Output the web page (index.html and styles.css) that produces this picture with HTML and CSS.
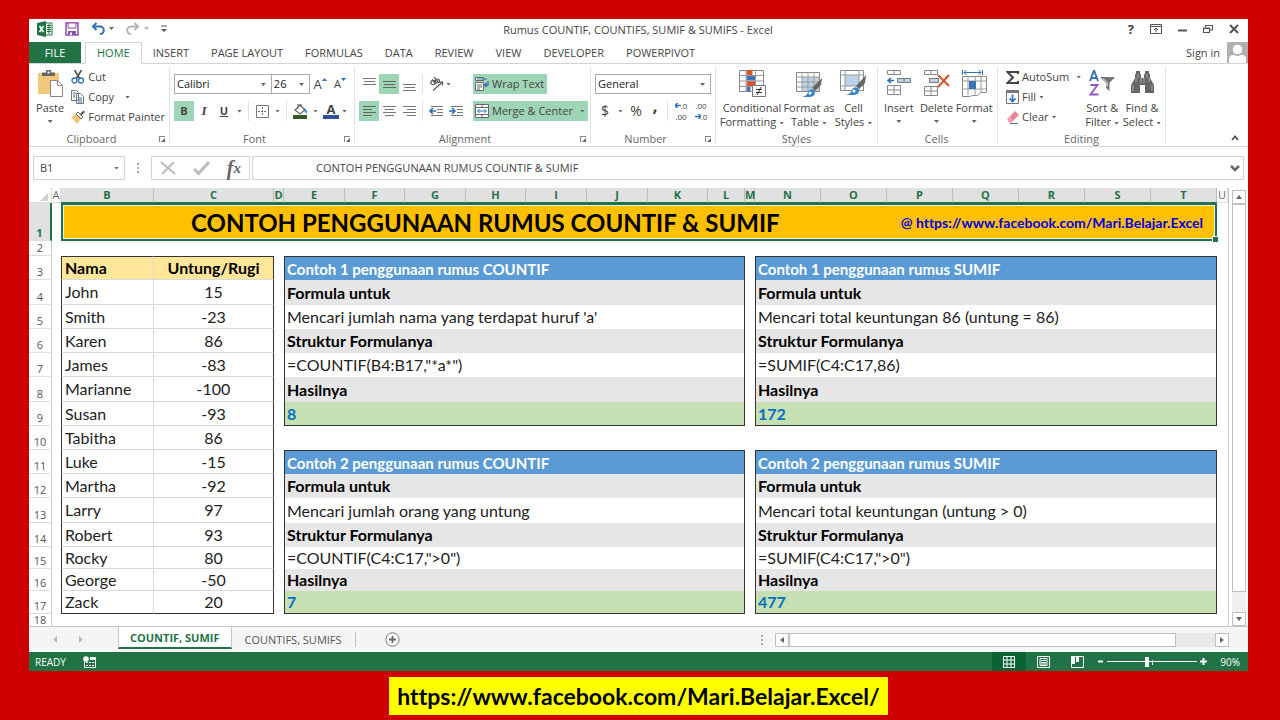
FILE: index.html
```html
<!DOCTYPE html>
<html lang="id">
<head>
<meta charset="utf-8">
<title>Rumus COUNTIF, COUNTIFS, SUMIF &amp; SUMIFS - Excel</title>
<meta name="viewport" content="width=device-width, initial-scale=1">
<link rel="stylesheet" href="styles.css">
</head>
<body>
<main class="window">
  <header class="titlebar">
    <div class="quick">
      <svg class="ico" width="16" height="16" viewBox="0 0 16 16" aria-hidden="true"><path d="M8 2h7v12H8z" fill="#fff" stroke="#217346"/><path d="M10 4.500h4M10 6.500h4M10 8.500h4M10 10.500h4M12 3v10" stroke="#217346"/><path d="M0 2l9-2v16l-9-2z" fill="#217346"/><path d="M2.500 5l4 6M6.500 5l-4 6" stroke="#fff" stroke-width="1.500"/></svg>
      <button class="plain" aria-label="Save"><svg width="14" height="14" viewBox="0 0 14 14"><path d="M1 1h12v12H1z" fill="#fff" stroke="#8a4fb0" stroke-width="1.500"/><path d="M3 1h8v5H3z" fill="#fff" stroke="#8a4fb0"/><path d="M3 9h8v4H3z" fill="#8a4fb0"/><path d="M5 10.500h2V13H5z" fill="#fff"/></svg></button>
      <button class="plain" aria-label="Undo"><svg width="23" height="14" viewBox="0 0 23 14"><path d="M2 4.500h7a3.800 3.800 0 0 1 0 7.600" fill="none" stroke="#2f6fb5" stroke-width="2"/><path d="M5.500 1L2 4.500 5.500 8" fill="none" stroke="#2f6fb5" stroke-width="2"/><path d="M18 5h5l-2.500 3z" fill="#666"/></svg></button>
      <button class="plain" aria-label="Redo"><svg width="23" height="14" viewBox="0 0 23 14"><path d="M12 4.500H5a3.800 3.800 0 0 0 0 7.600" fill="none" stroke="#b5b5b5" stroke-width="2"/><path d="M8.500 1L12 4.500 8.500 8" fill="none" stroke="#b5b5b5" stroke-width="2"/><path d="M18 5h5l-2.500 3z" fill="#b5b5b5"/></svg></button>
      <button class="plain" aria-label="Customize Quick Access Toolbar"><svg width="6" height="8" viewBox="0 0 6 8"><path d="M0 1h6" stroke="#555"/><path d="M0 4h6L3 7z" fill="#555"/></svg></button>
    </div>
    <h1 class="doc-title">Rumus COUNTIF, COUNTIFS, SUMIF &amp; SUMIFS - Excel</h1>
    <div class="win-buttons">
      <button class="plain help" aria-label="Help">?</button>
      <button class="plain" aria-label="Ribbon Display Options"><svg width="12" height="10" viewBox="0 0 12 10"><path d="M.5.500h11v9H.5zM.5 2.500h11" fill="none" stroke="#555"/><path d="M6 8.500V4M4 6l2-2 2 2" fill="none" stroke="#555"/></svg></button>
      <button class="plain" aria-label="Minimize"><svg width="9" height="10" viewBox="0 0 9 10"><path d="M0 6.500h9" stroke="#555" stroke-width="2"/></svg></button>
      <button class="plain" aria-label="Restore"><svg width="10" height="10" viewBox="0 0 10 10"><path d="M.5 4h6v4.500h-6zM.5 4.500h6M2.500 3V1.500h7V6H7" fill="none" stroke="#555" stroke-width="1.200"/></svg></button>
      <button class="plain" aria-label="Close"><svg width="10" height="10" viewBox="0 0 10 10"><path d="M1 1l8 8M9 1L1 9" stroke="#555" stroke-width="2"/></svg></button>
    </div>
  </header>

  <nav class="tabs">
    <button class="file">FILE</button>
    <button class="tab current">HOME</button>
    <button class="tab">INSERT</button>
    <button class="tab">PAGE LAYOUT</button>
    <button class="tab">FORMULAS</button>
    <button class="tab">DATA</button>
    <button class="tab">REVIEW</button>
    <button class="tab">VIEW</button>
    <button class="tab">DEVELOPER</button>
    <button class="tab">POWERPIVOT</button>
    <button class="signin">Sign in
      <svg width="21" height="21" viewBox="0 0 21 21" aria-hidden="true"><path d="M0 0h21v21H0z" fill="#b0b0b0"/><circle cx="10.500" cy="7.500" r="4.800" fill="#fff"/><path d="M2 21v-4q0-4 4-4h1q3.500 2 7 0h1q4 0 4 4v4z" fill="#fff"/></svg>
    </button>
  </nav>

  <section class="ribbon" aria-label="Home">
    <div class="group g-clip">
      <div class="tools">
        <button class="big paste"><svg width="27" height="27" viewBox="0 0 27 27"><path d="M1 3h21v21H1z" fill="#f0c77b"/><path d="M5 6V2.500h4V0h5v2.500h4V6z" fill="#666"/><path d="M10.500 1.500h2v2h-2z" fill="#fff"/><path d="M13.500 10.500h7l5 5v11h-12z" fill="#fff" stroke="#888"/><path d="M20.500 10.500v5h5" fill="none" stroke="#888"/></svg>Paste<i class="caret"></i></button>
        <div class="stack">
          <button class="line"><svg width="14" height="14" viewBox="0 0 14 14"><path d="M3.500 0l5.500 9M10.500 0L5 9" stroke="#555" stroke-width="1.700"/><circle cx="3.500" cy="10.500" r="2.500" fill="none" stroke="#3b74b5" stroke-width="1.300"/><circle cx="10" cy="10.500" r="2.500" fill="none" stroke="#3b74b5" stroke-width="1.300"/></svg>Cut</button>
          <button class="line"><svg width="14" height="14" viewBox="0 0 14 14"><path d="M.5.500h5l2 2v8h-7zM5.500 3.500h4l3 3v7h-7z" fill="#fff" stroke="#777"/><path d="M2 3h3M2 5h2M2 7h2M7 8h4M7 10h4M7 12h4" stroke="#3b74b5"/></svg>Copy<i class="caret gap"></i></button>
          <button class="line"><svg width="14" height="14" viewBox="0 0 14 14"><path d="M0 7l5-3 5 5-4 5z" fill="#f0c77b"/><path d="M5 4l2-2 5 5-2 2z" fill="#fff" stroke="#666"/><path d="M9 4l3.500-3.500L14 2l-3.500 3.500z" fill="#555"/></svg>Format Painter</button>
        </div>
      </div>
      <div class="glabel with-launch">Clipboard<i class="launch"></i></div>
    </div>

    <div class="group g-font">
      <div class="rows">
        <div class="row">
          <span class="combo fontname"><select aria-label="Font"><option>Calibri</option></select></span><span class="combo fontsize"><select aria-label="Font size"><option>26</option></select></span>
          <button class="t grow" aria-label="Increase Font Size">A<svg width="5" height="3" viewBox="0 0 5 3"><path d="M0 3h5L2.500 0z" fill="#2f6fb5"/></svg></button>
          <button class="t shrink" aria-label="Decrease Font Size">A<svg width="5" height="3" viewBox="0 0 5 3"><path d="M0 0h5L2.500 3z" fill="#2f6fb5"/></svg></button>
        </div>
        <div class="row">
          <button class="t on bold">B</button>
          <button class="t italic">I</button>
          <button class="t under">U</button>
          <i class="caret slim"></i>
          <i class="bar"></i>
          <button class="t" aria-label="Borders"><svg width="13" height="13" viewBox="0 0 13 13"><path d="M.5.500h12v12H.5z" fill="none" stroke="#777"/><path d="M6.500 2v9M2 6.500h9" stroke="#777" stroke-dasharray="2 1"/></svg></button>
          <i class="caret slim"></i>
          <i class="bar"></i>
          <button class="t" aria-label="Fill Color"><svg width="15" height="15" viewBox="0 0 15 15"><path d="M7 1l5 5-5 4-5-4z" fill="#fff" stroke="#666" stroke-width="1.200"/><path d="M5 5V0h3v3" fill="none" stroke="#666"/><path d="M11 4q4 2 2.500 6-1-3-3-3.500z" fill="#3b74b5"/><path d="M0 11h14v4H0z" fill="#375623"/></svg></button>
          <i class="caret slim"></i>
          <button class="t fcolor" aria-label="Font Color">A</button>
          <i class="caret slim"></i>
        </div>
      </div>
      <div class="glabel with-launch">Font<i class="launch"></i></div>
    </div>

    <div class="group g-align">
      <div class="tools">
        <div class="rows">
          <div class="row">
            <button class="t" aria-label="Top Align"><svg width="13" height="14" viewBox="0 0 13 14"><path d="M0 1.500h13M1 4.500h11M0 7.500h13" stroke="#777"/></svg></button>
            <button class="t on" aria-label="Middle Align"><svg width="13" height="14" viewBox="0 0 13 14"><path d="M0 4.500h13M1 7.500h11M0 10.500h13" stroke="#666"/></svg></button>
            <button class="t" aria-label="Bottom Align"><svg width="13" height="14" viewBox="0 0 13 14"><path d="M0 7.500h13M1 10.500h11M0 13.500h13" stroke="#777"/></svg></button>
            <i class="bar"></i>
            <button class="t" aria-label="Orientation"><svg width="15" height="14" viewBox="0 0 15 14"><g fill="none" stroke="#555" stroke-width="1.200"><circle cx="4" cy="5.500" r="2.200"/><path d="M3 2.500l3.500 4"/><circle cx="8.500" cy="4" r="2"/><path d="M5 0l4.500 5.500"/><path d="M4 13.500l9-8M10 5h3.500v3.500"/></g></svg></button>
            <i class="caret"></i>
          </div>
          <div class="row">
            <button class="t on" aria-label="Align Left"><svg width="13" height="10" viewBox="0 0 13 10"><path d="M0 .5h13M0 3.500h9M0 6.500h13M0 9.500h9" stroke="#666"/></svg></button>
            <button class="t" aria-label="Center"><svg width="13" height="10" viewBox="0 0 13 10"><path d="M0 .5h13M2 3.500h9M0 6.500h13M2 9.500h9" stroke="#777"/></svg></button>
            <button class="t" aria-label="Align Right"><svg width="13" height="10" viewBox="0 0 13 10"><path d="M0 .5h13M4 3.500h9M0 6.500h13M4 9.500h9" stroke="#777"/></svg></button>
            <i class="bar"></i>
            <button class="t" aria-label="Decrease Indent"><svg width="14" height="10" viewBox="0 0 14 10"><path d="M2 .5h12M8 3.500h6M8 6.500h6M2 9.500h12" stroke="#777"/><path d="M1 5h6M4 2L1 5l3 3" fill="none" stroke="#2f6fb5" stroke-width="1.600"/></svg></button>
            <button class="t" aria-label="Increase Indent"><svg width="14" height="10" viewBox="0 0 14 10"><path d="M2 .5h12M8 3.500h6M8 6.500h6M2 9.500h12" stroke="#777"/><path d="M0 5h6M3 2l3 3-3 3" fill="none" stroke="#2f6fb5" stroke-width="1.600"/></svg></button>
          </div>
        </div>
        <div class="rows wraps">
          <button class="wide on"><svg width="14" height="15" viewBox="0 0 14 15"><path d="M.5.500h8v3h-8zM.5 5.500h8v8h-8z" fill="#fff" stroke="#666"/><path d="M2 8h5M2 10h5M2 12h3" stroke="#666"/><path d="M2 2h10" stroke="#2f6fb5"/><path d="M13 4v4h-3M11.500 6l-2 2 2 2" fill="none" stroke="#2f6fb5" stroke-width="1.300"/></svg>Wrap Text</button>
          <button class="wide on"><svg width="14" height="14" viewBox="0 0 14 14"><path d="M.5.500h13v13H.5zM.5 3.500h13M.5 10.500h13M7 .5v3M7 10.500v3" fill="#fff" stroke="#666"/><path d="M3 7h8M4.500 5L2.500 7l2 2M9.500 5l2 2-2 2" fill="none" stroke="#2f6fb5"/></svg>Merge &amp; Center<i class="caret end"></i></button>
        </div>
      </div>
      <div class="glabel with-launch">Alignment<i class="launch"></i></div>
    </div>

    <div class="group g-num">
      <div class="rows">
        <div class="row"><span class="combo general"><select aria-label="Number Format"><option>General</option></select></span></div>
        <div class="row">
          <button class="t money">$</button>
          <i class="caret slim"></i>
          <button class="t money">%</button>
          <button class="t comma" aria-label="Comma Style">,</button>
          <i class="bar"></i>
          <button class="t dec" aria-label="Increase Decimal"><svg width="6" height="5" viewBox="0 0 6 5"><path d="M0 2.500h6M2.500 0L0 2.500 2.500 5" fill="none" stroke="#2f6fb5" stroke-width="1.400"/></svg><span>.0</span><span class="full">.00</span></button>
          <button class="t dec" aria-label="Decrease Decimal"><span class="full">.00</span><svg width="6" height="5" viewBox="0 0 6 5"><path d="M0 2.500h6M3.500 0L6 2.500 3.500 5" fill="none" stroke="#2f6fb5" stroke-width="1.400"/></svg><span>.0</span></button>
        </div>
      </div>
      <div class="glabel with-launch">Number<i class="launch"></i></div>
    </div>

    <div class="group g-styles">
      <div class="tools">
        <button class="big b-cond"><svg width="27" height="27" viewBox="0 0 27 27"><path d="M.5.500h24v21H.5z" fill="#fff" stroke="#888"/><path d="M7.500 0h6v5h-6zM7.500 11h9v5h-9z" fill="#d9532c"/><path d="M7.500 5.500h9v5h-9zM7.500 16.500h4v5h-4z" fill="#3b74b5"/><path d="M.5 5.500h24M.5 11h24M.5 16.500h24M7 .5v21M16.500.500v21" stroke="#999" fill="none"/><path d="M13.500 15.500h13v11h-13z" fill="#fff" stroke="#777"/><path d="M17 19.500h6M17 22.500h6M22 17l-4 8" stroke="#333"/></svg><span>Conditional<br>Formatting<i class="caret in"></i></span></button>
        <button class="big b-table"><svg width="27" height="27" viewBox="0 0 27 27"><path d="M.5 2.500h23v19H.5z" fill="#fff" stroke="#888"/><path d="M6 7h17v14H6z" fill="#bcd3ea"/><path d="M.5 7h23M.5 12h23M.5 17h23M6 2.500v19M12 2.500v19M18 2.500v19" stroke="#999"/><path d="M26 8l-1 7-6 6-3-3z" fill="#666"/><path d="M6 27q5-1 6-5t6-2q3 6-4 7z" fill="#3b84c6"/><circle cx="14" cy="23" r="1.500" fill="#fff"/></svg><span>Format as<br>Table<i class="caret in"></i></span></button>
        <button class="big b-cell"><svg width="27" height="27" viewBox="0 0 27 27"><path d="M.5.500h23v20H.5z" fill="#fff" stroke="#888"/><path d="M5 5h14v11H5z" fill="#bcd3ea"/><path d="M.5 5h23M.5 16h23M5 .5v20M19 .5v20" stroke="#999"/><path d="M26 5l-1 8-6 6-3-3z" fill="#666"/><path d="M6 25q5-1 6-5t6-2q3 6-4 7z" fill="#3b84c6"/><circle cx="14" cy="21" r="1.500" fill="#fff"/></svg><span>Cell<br>Styles<i class="caret in"></i></span></button>
      </div>
      <div class="glabel">Styles</div>
    </div>

    <div class="group g-cells">
      <div class="tools">
        <button class="big b-c"><svg width="27" height="27" viewBox="0 0 27 27"><path d="M2.500.500h13v4h-13zM9 .5v4M2.500 15.500h13v9h-13zM9 15.500v9M2.500 20h13" fill="#fff" stroke="#888"/><path d="M12.500 8.500h13v4h-13zM19 8.500v4" fill="#bcd3ea" stroke="#777"/><path d="M3 10.500h6M6 8l-3 2.500L6 13" fill="none" stroke="#2f6fb5" stroke-width="1.600"/></svg>Insert<i class="caret"></i></button>
        <button class="big b-c"><svg width="27" height="27" viewBox="0 0 27 27"><path d="M1.500.500h13v4h-13zM8 .5v4M1.500 16.500h13v9h-13zM8 16.500v9M1.500 21h13" fill="#fff" stroke="#888"/><path d="M6.500 8.500h9v4h-9z" fill="#bcd3ea" stroke="#777"/><path d="M15 5l11 11M26 5L15 17" stroke="#d9532c" stroke-width="2"/></svg>Delete<i class="caret"></i></button>
        <button class="big b-c"><svg width="27" height="27" viewBox="0 0 27 27"><path d="M1.500 0v5M21.500 0v5M3 2.500h17M5.500 0L3 2.500 5.500 5M17.500 0L20 2.500 17.500 5" fill="none" stroke="#2f6fb5"/><path d="M1.500 6.500h24v16h-6l-3 3h-5l-3 1h-7z" fill="#fff" stroke="#888"/><path d="M1.500 11h24M1.500 19h24M7 6.500v19M14 6.500v18M20 6.500v16" stroke="#999"/><path d="M8 11h7v8H8z" fill="#3b74b5"/></svg>Format<i class="caret"></i></button>
      </div>
      <div class="glabel">Cells</div>
    </div>

    <div class="group g-edit">
      <div class="tools">
        <div class="stack">
          <button class="line"><svg width="13" height="13" viewBox="0 0 13 13"><path d="M12 3V1H1.500L7 6.500 1.500 12H12v-2" fill="none" stroke="#444" stroke-width="2"/></svg>AutoSum<i class="caret far"></i></button>
          <button class="line"><svg width="13" height="14" viewBox="0 0 13 14"><path d="M.5.500h12v13H.5z" fill="#fff" stroke="#777"/><path d="M0 0h13v3H0z" fill="#777"/><path d="M6.500 4.500v7M3.500 8.500l3 3 3-3" fill="none" stroke="#2f6fb5" stroke-width="1.700"/></svg>Fill<i class="caret"></i></button>
          <button class="line"><svg width="13" height="13" viewBox="0 0 13 13"><path d="M4 5l5-5 4 4-6 6z" fill="#e8849a"/><path d="M1 8l3-3 3.500 4.500L5 12H3.500z" fill="#e8849a" opacity=".75"/><path d="M4 12.500h8" stroke="#777"/></svg>Clear<i class="caret"></i></button>
        </div>
        <button class="big b-sort"><svg width="26" height="27" viewBox="0 0 26 27"><path d="M1 11L4.800 1h.4L9 11M2.500 8h5" fill="none" stroke="#3b74b5" stroke-width="2"/><path d="M1.500 15h7l-7 9.500h8" fill="none" stroke="#9355b8" stroke-width="1.800"/><path d="M11 7h15l-5.500 6v8l-3.500-3v-5z" fill="#777"/><path d="M14 8.500l4 4v4" fill="none" stroke="#fff"/></svg><span>Sort &amp;<br>Filter<i class="caret in"></i></span></button>
        <button class="big b-find"><svg width="25" height="27" viewBox="0 0 25 27"><path d="M6 1h4v3h1v4h3V4h1V1h4v3h1v4l4 7v8h-9v-8h-5v8H1v-8l4-7V4h1z" fill="#666"/><path d="M3 15v6M6 8v4M19 8v4M22 15v6M11 8v5M14 8v5M8 4v4M17 4v4" stroke="#aaa"/></svg><span>Find &amp;<br>Select<i class="caret in"></i></span></button>
      </div>
      <div class="glabel">Editing</div>
    </div>
    <button class="plain collapse" aria-label="Collapse the Ribbon"><svg width="8" height="6" viewBox="0 0 8 6"><path d="M1 5l3-3.500L7 5" fill="none" stroke="#555" stroke-width="1.800"/></svg></button>
  </section>

  <section class="formula-bar">
    <span class="combo namebox"><select aria-label="Name Box"><option>B1</option></select></span>
    <i class="dots"></i>
    <div class="fx">
      <button class="plain" aria-label="Cancel"><svg width="16" height="14" viewBox="0 0 16 14"><path d="M1 1l14 12M14 1L2 13" stroke="#bbb" stroke-width="2"/></svg></button>
      <button class="plain" aria-label="Enter"><svg width="17" height="14" viewBox="0 0 17 14"><path d="M1 8l4.500 4.500L16 1" fill="none" stroke="#bbb" stroke-width="3"/></svg></button>
      <button class="plain fn" aria-label="Insert Function">f<small>x</small></button>
    </div>
    <div class="formula">
      <input type="text" aria-label="Formula Bar" value="CONTOH PENGGUNAAN RUMUS COUNTIF &amp; SUMIF">
      <button class="plain" aria-label="Expand Formula Bar"><svg width="10" height="8" viewBox="0 0 10 8"><path d="M1 2l4 4 4-4" fill="none" stroke="#666" stroke-width="2.500"/></svg></button>
    </div>
  </section>

  <section class="sheet-area">
    <table class="sheet">
      <colgroup><col class="c-head"><col class="c-a"><col class="c-b"><col class="c-c"><col class="c-d"><col class="c-e"><col class="c-f"><col class="c-e"><col class="c-f"><col class="c-e" span="2"><col class="c-f"><col class="c-l"><col class="c-d"><col class="c-n" span="7"><col class="c-u"></colgroup>
      <thead>
        <tr class="letters"><th class="corner"><svg width="8" height="8" viewBox="0 0 8 8" aria-hidden="true"><path d="M8 0v8H0z" fill="#d0d0d0"/></svg></th><th class="off">A</th><th>B</th><th>C</th><th>D</th><th>E</th><th>F</th><th>G</th><th>H</th><th>I</th><th>J</th><th>K</th><th>L</th><th>M</th><th>N</th><th>O</th><th>P</th><th>Q</th><th>R</th><th>S</th><th>T</th><th class="off">U</th></tr>
      </thead>
      <tbody>
        <tr class="r1"><th class="sel">1</th><td></td><td class="banner" colspan="19"><div class="banner-in"><span class="banner-title">CONTOH PENGGUNAAN RUMUS COUNTIF &amp; SUMIF</span><a href="https://www.facebook.com/Mari.Belajar.Excel">@ https://www.facebook.com/Mari.Belajar.Excel</a></div><i class="handle"></i></td><td></td></tr>
        <tr class="r2"><th>2</th><td colspan="21"></td></tr>
        <tr class="r24"><th>3</th><td></td><td class="nh">Nama</td><td class="vh">Untung/Rugi</td><td></td><td class="bk blue" colspan="8">Contoh 1 penggunaan rumus COUNTIF</td><td></td><td class="bk blue" colspan="7">Contoh 1 penggunaan rumus SUMIF</td><td></td></tr>
        <tr class="r25"><th>4</th><td></td><td class="n">John</td><td class="v">15</td><td></td><td class="bk lab" colspan="8">Formula untuk</td><td></td><td class="bk lab" colspan="7">Formula untuk</td><td></td></tr>
        <tr class="r24"><th>5</th><td></td><td class="n">Smith</td><td class="v">-23</td><td></td><td class="bk" colspan="8">Mencari jumlah nama yang terdapat huruf 'a'</td><td></td><td class="bk" colspan="7">Mencari total keuntungan 86 (untung = 86)</td><td></td></tr>
        <tr class="r24"><th>6</th><td></td><td class="n">Karen</td><td class="v">86</td><td></td><td class="bk lab" colspan="8">Struktur Formulanya</td><td></td><td class="bk lab" colspan="7">Struktur Formulanya</td><td></td></tr>
        <tr class="r24"><th>7</th><td></td><td class="n">James</td><td class="v">-83</td><td></td><td class="bk" colspan="8">=COUNTIF(B4:B17,"*a*")</td><td></td><td class="bk" colspan="7">=SUMIF(C4:C17,86)</td><td></td></tr>
        <tr class="r25"><th>8</th><td></td><td class="n">Marianne</td><td class="v">-100</td><td></td><td class="bk lab" colspan="8">Hasilnya</td><td></td><td class="bk lab" colspan="7">Hasilnya</td><td></td></tr>
        <tr class="r24"><th>9</th><td></td><td class="n">Susan</td><td class="v">-93</td><td></td><td class="bk res" colspan="8">8</td><td></td><td class="bk res" colspan="7">172</td><td></td></tr>
        <tr class="r24"><th>10</th><td></td><td class="n">Tabitha</td><td class="v">86</td><td colspan="18"></td></tr>
        <tr class="r24"><th>11</th><td></td><td class="n">Luke</td><td class="v">-15</td><td></td><td class="bk blue" colspan="8">Contoh 2 penggunaan rumus COUNTIF</td><td></td><td class="bk blue" colspan="7">Contoh 2 penggunaan rumus SUMIF</td><td></td></tr>
        <tr class="r24"><th>12</th><td></td><td class="n">Martha</td><td class="v">-92</td><td></td><td class="bk lab" colspan="8">Formula untuk</td><td></td><td class="bk lab" colspan="7">Formula untuk</td><td></td></tr>
        <tr class="r25"><th>13</th><td></td><td class="n">Larry</td><td class="v">97</td><td></td><td class="bk" colspan="8">Mencari jumlah orang yang untung</td><td></td><td class="bk" colspan="7">Mencari total keuntungan (untung &gt; 0)</td><td></td></tr>
        <tr class="r24"><th>14</th><td></td><td class="n">Robert</td><td class="v">93</td><td></td><td class="bk lab" colspan="8">Struktur Formulanya</td><td></td><td class="bk lab" colspan="7">Struktur Formulanya</td><td></td></tr>
        <tr class="r22"><th>15</th><td></td><td class="n">Rocky</td><td class="v">80</td><td></td><td class="bk" colspan="8">=COUNTIF(C4:C17,"&gt;0")</td><td></td><td class="bk" colspan="7">=SUMIF(C4:C17,"&gt;0")</td><td></td></tr>
        <tr class="r22"><th>16</th><td></td><td class="n">George</td><td class="v">-50</td><td></td><td class="bk lab" colspan="8">Hasilnya</td><td></td><td class="bk lab" colspan="7">Hasilnya</td><td></td></tr>
        <tr class="r23 last"><th>17</th><td></td><td class="n">Zack</td><td class="v">20</td><td></td><td class="bk res" colspan="8">7</td><td></td><td class="bk res" colspan="7">477</td><td></td></tr>
        <tr class="r18"><th>18</th><td colspan="21"></td></tr>
      </tbody>
    </table>
    <div class="vscroll">
      <button class="sb" aria-label="Scroll up"><svg width="6" height="4" viewBox="0 0 6 4"><path d="M0 4h6L3 0z" fill="#666"/></svg></button>
      <div class="vthumb"></div>
      <div class="vtrack"></div>
      <button class="sb" aria-label="Scroll down"><svg width="6" height="4" viewBox="0 0 6 4"><path d="M0 0h6L3 4z" fill="#666"/></svg></button>
    </div>
  </section>

  <nav class="sheet-tabs">
    <div class="arrows">
      <button class="plain" aria-label="Previous sheet"><svg width="4" height="7" viewBox="0 0 4 7"><path d="M4 0v7L0 3.500z" fill="#bbb"/></svg></button>
      <button class="plain" aria-label="Next sheet"><svg width="4" height="7" viewBox="0 0 4 7"><path d="M0 0v7l4-3.500z" fill="#bbb"/></svg></button>
    </div>
    <button class="stab active">COUNTIF, SUMIF</button>
    <button class="stab">COUNTIFS, SUMIFS</button>
    <button class="plain add" aria-label="New sheet"><svg width="15" height="15" viewBox="0 0 15 15"><circle cx="7.500" cy="7.500" r="6.700" fill="#fff" stroke="#777"/><path d="M7.500 4v7M4 7.500h7" stroke="#666" stroke-width="1.800"/></svg></button>
    <i class="dots hdots"></i>
    <div class="hscroll">
      <button class="sb" aria-label="Scroll left"><svg width="4" height="6" viewBox="0 0 4 6"><path d="M4 0v6L0 3z" fill="#666"/></svg></button>
      <div class="hthumb"></div>
      <div class="htrack"></div>
      <button class="sb" aria-label="Scroll right"><svg width="4" height="6" viewBox="0 0 4 6"><path d="M0 0v6l4-3z" fill="#666"/></svg></button>
    </div>
  </nav>

  <footer class="status">
    <span>READY</span>
    <svg class="macro" width="13" height="12" viewBox="0 0 13 12" aria-hidden="true"><path d="M1.500 4v7.500h11v-10H7" fill="none" stroke="#fff"/><path d="M7 2h5v2H7z" fill="#fff"/><path d="M3 6.500h8M3 9.500h8" stroke="#fff" stroke-dasharray="2 1"/><circle cx="3" cy="3" r="2.800" fill="#fff"/></svg>
    <div class="views">
      <button class="view cur" aria-label="Normal"><svg width="12" height="12" viewBox="0 0 12 12"><path d="M.5.500h11v11H.5zM4 .5v11M8 .5v11M.5 4h11M.5 8h11" fill="none" stroke="#fff"/></svg></button>
      <button class="view" aria-label="Page Layout"><svg width="13" height="12" viewBox="0 0 13 12"><path d="M.5.500h12v11H.5zM3 2.500h7v7H3z" fill="none" stroke="#fff"/><path d="M4 4.500h5M4 6.500h5M4 8h5" stroke="#fff"/></svg></button>
      <button class="view" aria-label="Page Break Preview"><svg width="13" height="12" viewBox="0 0 13 12"><path d="M.5.500h12v11H.5z" fill="none" stroke="#fff"/><path d="M0 0h4v8H0zM5 0h3v6H5z" fill="#fff"/></svg></button>
    </div>
    <button class="zoom" aria-label="Zoom out"><svg width="7" height="7" viewBox="0 0 7 7"><path d="M1 3.500h5" stroke="#fff" stroke-width="2"/></svg></button>
    <span class="range"><input type="range" min="0" max="100" value="44" aria-label="Zoom"></span>
    <button class="zoom" aria-label="Zoom in"><svg width="7" height="7" viewBox="0 0 7 7"><path d="M0 3.500h7M3.500 0v7" stroke="#fff" stroke-width="2"/></svg></button>
    <button class="pct">90%</button>
  </footer>
</main>
<p class="caption"><a href="https://www.facebook.com/Mari.Belajar.Excel/">https://www.facebook.com/Mari.Belajar.Excel/</a></p>
</body>
</html>
```
FILE: styles.css
```css
* { box-sizing: border-box; }
body {
  margin: 0;
  padding: 19px 32px 5px 29px;
  background: #cc0000;
  color: #444;
  font: 11px/14px "Open Sans", "Noto Sans", sans-serif;
  font-variant-ligatures: none;
}
button, input, select { font: inherit; color: inherit; margin: 0; padding: 0; border: 0; background: none; border-radius: 0; }
button { white-space: nowrap; }
svg { display: block; flex: none; }
i { flex: none; }
.window { background: #fff; }
.plain { display: flex; align-items: center; justify-content: center; }

.titlebar { display: grid; grid-template-columns: 1fr auto 1fr; align-items: center; height: 23px; padding: 0 9px 0 8px; }
.quick { display: flex; align-items: center; gap: 12px; padding-bottom: 3px; }
.doc-title { margin: 0; padding-bottom: 2px; font-size: 11px; font-weight: 400; }
.win-buttons { display: flex; justify-content: flex-end; align-items: center; gap: 16px; padding-bottom: 3px; }
.help { font-size: 13px; font-weight: 700; }

.tabs { display: flex; height: 22px; border-bottom: 1px solid #d4d4d4; }
.file { width: 52px; margin-right: 4px; background: #217346; color: #fff; }
.tab { padding: 0 11px; }
.current { height: 22px; border: 1px solid #d4d4d4; border-bottom-color: #fff; background: #fff; color: #217346; }
.signin { display: flex; align-items: center; gap: 7px; margin-left: auto; }

.ribbon { display: flex; height: 83px; border-bottom: 1px solid #d4d4d4; padding: 3px 0; }
.group { position: relative; display: flex; flex-direction: column; justify-content: space-between; padding: 0 4px; border-right: 1px solid #e1e1e1; }
.g-clip { width: 141px; }
.g-font { width: 185px; }
.g-align { width: 236px; }
.g-num { width: 125px; }
.g-styles { width: 162px; }
.g-cells { width: 120px; padding-left: 2px; }
.g-edit { width: 168px; }
.tools { display: flex; }
.glabel { text-align: center; color: #666; line-height: 8px; }
.with-launch { padding-right: 15px; }
.launch { position: absolute; right: 4px; bottom: 1px; width: 6px; height: 6px; border: solid #888; border-width: 1px 0 0 1px; }
.launch::after { content: ""; position: absolute; right: 0; bottom: 0; border: 2px solid; border-color: transparent #666 #666 transparent; }
.caret { display: inline-block; width: 5px; height: 3px; background: #666; clip-path: polygon(0 0, 100% 0, 50% 100%); }
.caret.in { margin-left: 3px; vertical-align: middle; }
.caret.gap { margin-left: 8px; }
.caret.far { margin-left: 4px; }
.caret.slim { margin: 0 3px; }
.big { display: flex; flex-direction: column; align-items: center; padding-top: 3px; line-height: 14px; }
.big svg { margin-bottom: 4px; }
.big > .caret { margin-top: 5px; }
.paste { width: 37px; }
.stack { display: flex; flex-direction: column; padding-left: 4px; }
.line { display: flex; align-items: center; gap: 3px; height: 20px; }
.rows { display: flex; flex-direction: column; gap: 7px; padding-top: 7px; }
.row { display: flex; align-items: center; height: 20px; }
.t { display: flex; align-items: center; justify-content: center; width: 20px; height: 20px; flex: none; }
.on { background: #9fd5b7; }
.bar { width: 1px; height: 20px; margin: 0 3px; background: #e1e1e1; }
.combo { position: relative; display: flex; height: 20px; border: 1px solid #ababab; background: #fff; color: #222; }
.combo select { appearance: none; width: 100%; padding: 0 2px; outline: 0; }
.combo::after { content: ""; position: absolute; right: 5px; top: calc(50% - 1px); width: 5px; height: 3px; background: #666; clip-path: polygon(0 0, 100% 0, 50% 100%); }
.fontname { width: 100px; }
.fontsize { width: 39px; border-left: 0; }
.grow { font-size: 13px; }
.shrink { font-size: 11px; }
.grow svg, .shrink svg { margin-bottom: 10px; }
.bold { font-weight: 700; }
.italic { font: italic 700 13px "Liberation Serif", serif; }
.under { font-weight: 700; text-decoration: underline; }
.fcolor { width: 16px; height: 15px; margin-left: 2px; font-size: 13px; line-height: 11px; font-weight: 700; border-bottom: 4px solid #2f4f9a; }
.wraps { gap: 7px; align-items: flex-start; padding-left: 7px; }
.wide { display: flex; align-items: center; gap: 3px; height: 20px; padding: 0 3px 0 2px; }
.end { margin-left: 4px; }
.general { width: 117px; }
.money { font-size: 14px; }
.comma { font-size: 18px; font-weight: 700; width: 18px; padding-bottom: 12px; }
.dec { flex-wrap: wrap; align-content: center; font-size: 8px; line-height: 11px; }
.dec .full { padding: 0 2px; }
.b-cond { width: 64px; }
.b-table { width: 50px; }
.b-cell { width: 40px; }
.b-c { width: 38px; }
.g-edit .stack { width: 80px; }
.b-sort { width: 42px; }
.b-find { width: 38px; }
.collapse { margin: auto 9px 2px auto; }

.formula-bar { display: flex; align-items: center; height: 41px; padding: 0 4px; }
.namebox { width: 92px; height: 24px; border-color: #d4d4d4; color: #444; }
.namebox select { padding-left: 6px; }
.dots { width: 2px; height: 10px; margin: 0 12px; background: repeating-linear-gradient(#aaa 0 2px, transparent 2px 4px); }
.fx { display: flex; align-items: center; justify-content: space-between; width: 99px; height: 24px; padding: 0 8px; border: 1px solid #d4d4d4; margin-right: 2px; }
.fn { font: italic 700 20px/20px "Liberation Serif", serif; color: #666; }
.fn small { font-size: 15px; align-self: flex-end; }
.formula { display: flex; flex: 1; height: 24px; border: 1px solid #d4d4d4; }
.formula input { flex: 1; padding-left: 63px; outline: 0; }
.formula button { width: 16px; }

.sheet-area { display: flex; gap: 3px; padding-right: 2px; border-bottom: 1px solid #c6c6c6; }
.sheet { flex: 1; width: 100%; table-layout: fixed; border-collapse: separate; border-spacing: 0; border-right: 1px solid #c6c6c6; }
.c-head { width: 23px; }
.c-a { width: 9px; }
.c-b { width: 93px; }
.c-c { width: 120px; }
.c-d { width: 10px; }
.c-e { width: 61px; }
.c-f { width: 60px; }
.c-l { width: 37px; }
.c-n { width: 66px; }
.c-u { width: 11px; }
.sheet th, .sheet td { padding: 0; white-space: nowrap; }
.letters { height: 15px; }
.letters th { background: #e1e1e1; color: #217346; font-weight: 700; line-height: 14px; border-right: 1px solid #bbb; border-bottom: 1px solid #217346; }
.letters .off, .letters .corner { background: #fff; color: #666; font-weight: 400; border-color: #ddd; }
.corner svg { margin: 3px 3px 0 auto; }
tbody th { font-weight: 400; line-height: 15px; vertical-align: bottom; color: #555; border-right: 1px solid #c6c6c6; border-bottom: 1px solid #ddd; }
tbody .sel { background: #e1e1e1; color: #217346; font-weight: 700; border-right: 2px solid #217346; }
.sheet td { font: 16px/20px Lato, "Noto Sans", sans-serif; color: #222; }
.r1 { height: 38px; }
.r2 { height: 15px; }
.r22 { height: 22px; }
.r23 { height: 23px; }
.r24 { height: 24px; }
.r25 { height: 25px; }
.r18 { height: 12px; }
.r2 th, .r18 th { line-height: 12px; vertical-align: middle; }
.r18 th { border-bottom: 0; }
.sheet .banner { position: relative; background: #ffc000; border: 2px solid #217346; box-shadow: inset 0 0 0 1px #e8eef5; }
.banner-in { display: flex; justify-content: space-between; align-items: center; padding: 2px 12px 0 128px; line-height: 32px; color: #000; font-weight: 700; }
.banner-title { font-size: 24px; }
.banner a { color: #0000e0; font-size: 14px; text-decoration: none; font-variant-ligatures: none; }
.handle { position: absolute; right: -3px; bottom: -3px; width: 5px; height: 5px; background: #217346; outline: 1px solid #fff; }
.sheet .n, .sheet .nh { padding-left: 3px; border-left: 1px solid #333; border-right: 1px solid #d9d9d9; border-bottom: 1px solid #d9d9d9; }
.sheet .v, .sheet .vh { text-align: center; border-right: 1px solid #333; border-bottom: 1px solid #d9d9d9; }
.sheet .nh, .sheet .vh { background: #ffe699; color: #000; font-weight: 700; border-top: 1px solid #333; }
.sheet .bk { padding-left: 2px; border: solid #333; border-width: 0 1px; }
.sheet .blue { background: #5b9bd5; color: #fff; font-size: 15px; font-weight: 700; border-top-width: 1px; }
.sheet .lab { background: #e6e6e6; color: #000; font-weight: 700; }
.sheet .res { background: #c6e0b4; color: #0070c0; font-weight: 700; border-bottom-width: 1px; }
.sheet .last .n, .sheet .last .v { border-bottom-color: #333; }

.vscroll { display: flex; flex-direction: column; width: 14px; padding-top: 2px; }
.sb { display: flex; align-items: center; justify-content: center; width: 14px; height: 14px; flex: none; border: 1px solid #c0c0c0; background: #fff; }
.vthumb { flex: 19; border: 1px solid #c0c0c0; }
.vtrack { flex: 1; background: #f0f0f0; }

.sheet-tabs { display: flex; align-items: center; height: 25px; padding-right: 19px; background: #f5f5f5; }
.arrows { display: flex; gap: 22px; width: 89px; padding-left: 24px; }
.stab { height: 15px; padding: 0 13px; border-right: 1px solid #bbb; color: #555; }
.active { align-self: flex-start; height: 22px; padding: 2px 11px 0; background: #fff; color: #217346; font-weight: 700; border: solid #c6c6c6; border-width: 0 1px; border-bottom: 2px solid #217346; }
.add { margin-left: 29px; }
.hdots { margin-left: auto; }
.hscroll { display: flex; width: 454px; }
.hthumb { flex: 388; border: 1px solid #c0c0c0; background: #fff; }
.htrack { flex: 39; background: #e8e8e8; }

.status { display: flex; align-items: center; height: 19px; padding: 0 8px 0 6px; background: #217346; color: #fff; font-size: 10px; }
.macro { margin-left: 17px; }
.views { display: flex; margin-left: auto; }
.view { display: flex; align-items: center; justify-content: center; width: 34px; height: 19px; }
.cur { background: #0a6332; }
.zoom { display: flex; align-items: center; justify-content: center; width: 13px; height: 15px; }
.range { position: relative; display: flex; width: 90px; }
.range::before { content: ""; position: absolute; left: 50%; top: 4px; width: 1px; height: 5px; background: #fff; }
.range input { appearance: none; width: 100%; height: 12px; background: linear-gradient(#fff, #fff) center / 100% 1px no-repeat; }
.range input::-webkit-slider-thumb { appearance: none; width: 4px; height: 10px; background: #fff; border-radius: 0; }
.pct { margin-left: 10px; }

.caption { width: fit-content; margin: 6px auto 0; padding: 4px 8px; background: #ffff00; font: 700 23px/30px Lato, "Noto Sans", sans-serif; font-variant-ligatures: none; }
.caption a { color: #000; text-decoration: none; }
```
